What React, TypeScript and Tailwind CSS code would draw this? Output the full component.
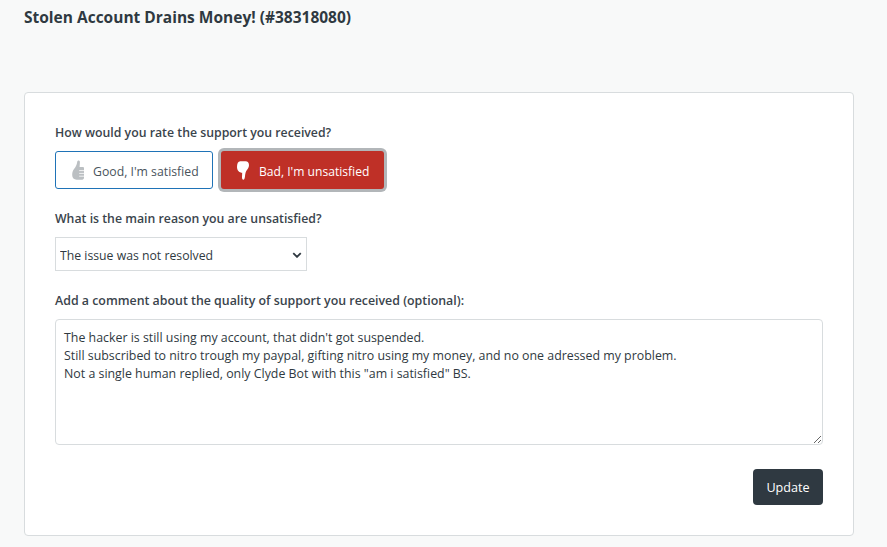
export default function App() {
  return (
    <div className="h-[547px] overflow-hidden bg-[#f8f9f9] pl-6 pr-[33px] pt-[8px] font-['Open_Sans',sans-serif] text-[#2f3941]">
      <h1 className="text-[15.5px] leading-[18px] font-bold">Stolen Account Drains Money! (#38318080)</h1>

      <div className="mt-[66px] h-[444px] rounded border border-[#d8dcde] bg-white px-[30px] pt-[30px]">
        <p className="text-[12.3px] leading-[20px] font-semibold text-[#3a444c]">How would you rate the support you received?</p>

        <div className="mt-2 flex items-center gap-2">
          <button className="flex h-[38px] w-[158px] items-center rounded-[3px] border border-[#1f73b7] bg-white pl-4 text-[12.25px] text-[#49545c]">
            <svg viewBox="0 0 12 20" className="mr-[9px] h-[20px] w-[12px] fill-[#bbbfc2]">
              <path d="M6.6.5c1 0 1.4.9 1.3 2.1L7.6 7h3.2c.7 0 1.2.5 1.2 1.2v9.6c0 1.1-.7 1.9-1.7 1.9H4.6C2 19.7.2 17.8.2 15c0-2.8.7-4.6 2-6.2C3.6 7 4.9 5 5.2 2c.1-1 .6-1.5 1.4-1.5z" />
              <path d="M7.2 10.6H12M7.2 13.4H12M7.2 16.2H12" stroke="#fff" strokeWidth="0.8" />
            </svg>
            <span className="pt-1">Good, I'm satisfied</span>
          </button>
          <button className="flex h-[38px] w-[163px] items-center rounded-[3px] bg-[#bf3027] pl-4 text-[12.1px] text-white ring-[3px] ring-[#b2b6b9]">
            <svg viewBox="0 0 12 19" className="mr-[10px] h-[19px] w-[12px] fill-white">
              <path d="M3.2.3h5.4c2.1 0 3.4 1.5 3.4 3.6 0 2.1-.9 3.7-2.1 5.1-1.2 1.5-1.7 3.7-2 7-.2 1.6-.7 2.7-1.5 2.7-1 0-1.5-1.2-1.4-2.7l.2-4.2C2.6 11.6 0 9.8 0 6 0 2.6 1.1.3 3.2.3z" />
            </svg>
            <span className="pt-1">Bad, I'm unsatisfied</span>
          </button>
        </div>

        <p className="mt-5 text-[12.3px] leading-[20px] font-semibold text-[#3a444c]">What is the main reason you are unsatisfied?</p>

        <div className="relative mt-2 h-[34px] w-[252px]">
          <select className="h-full w-full appearance-none rounded-none border border-[#d8dcde] bg-white pl-1 pt-1 text-[12.25px] text-[#2f3941] outline-none">
            <option>The issue was not resolved</option>
          </select>
          <svg viewBox="0 0 12 8" className="pointer-events-none absolute top-[15px] right-[5px] h-[6px] w-[10px] fill-none stroke-[#2f3941] stroke-[2.4]">
            <path d="M1 1.5l5 5 5-5" />
          </svg>
        </div>

        <p className="mt-5 text-[12.38px] leading-[20px] font-semibold text-[#3a444c]">Add a comment about the quality of support you received (optional):</p>

        <textarea
          readOnly
          className="mt-2 block h-[126px] w-[768px] rounded border border-[#d8dcde] bg-white px-2 pt-[9px] text-[12.38px] leading-[18px] text-[#2f3941] outline-none"
          value={`The hacker is still using my account, that didn't got suspended.\nStill subscribed to nitro trough my paypal, gifting nitro using my money, and no one adressed my problem.\nNot a single human replied, only Clyde Bot with this "am i satisfied" BS.`}
        />

        <div className="mt-6 flex w-[768px] justify-end">
          <button className="h-9 w-[70px] rounded bg-[#2f3941] pt-[2px] text-[12.6px] text-white">Update</button>
        </div>
      </div>
    </div>
  );
}
